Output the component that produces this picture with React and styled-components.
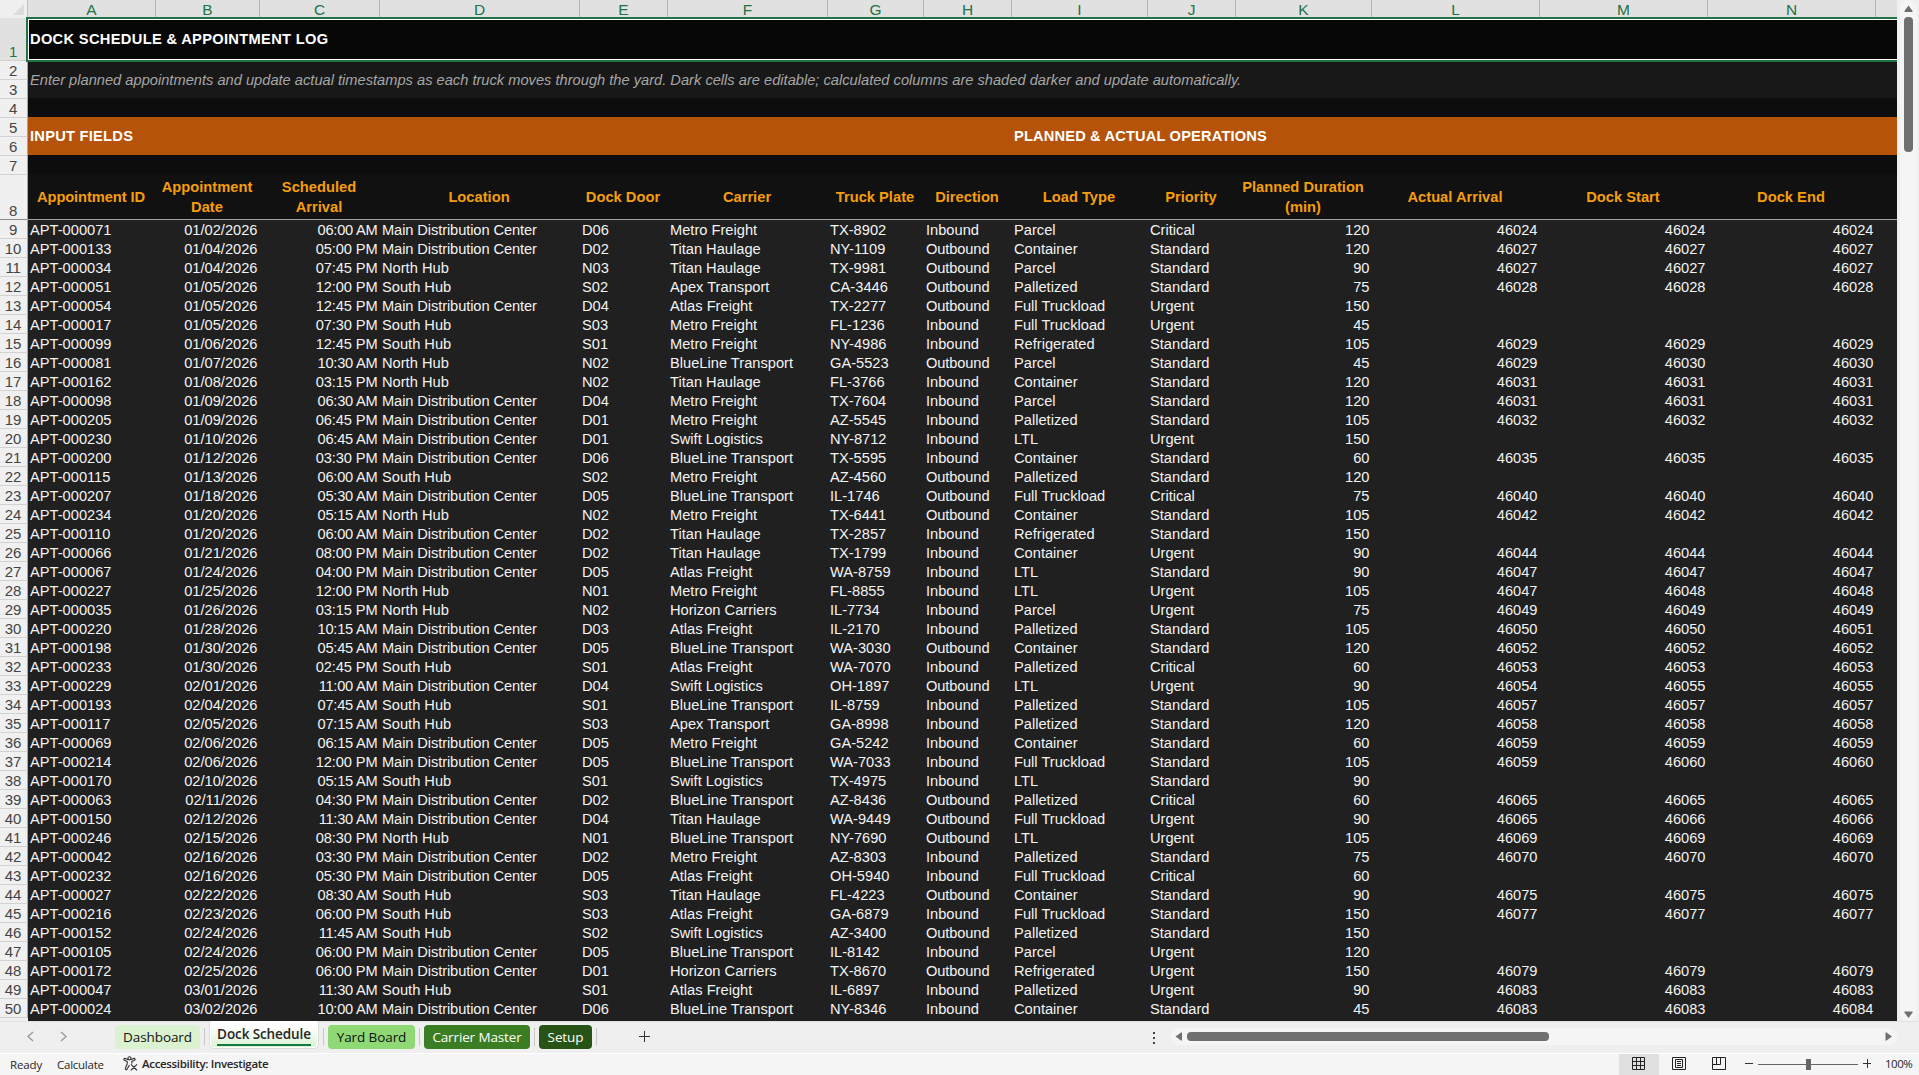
import React from "react";
import styled, { createGlobalStyle } from "styled-components";

const Global = createGlobalStyle`
  * { box-sizing: border-box; }
  html, body { margin: 0; padding: 0; overflow: hidden; background: #efefef; }
`;

const SANS = '"Liberation Sans", Arial, sans-serif';
const UI = '"Open Sans", "Noto Sans", sans-serif';

const COLUMNS = [
  { id: "A", width: 128, title: ["Appointment ID"], titleTrack: -0.08 },
  { id: "B", width: 104, title: ["Appointment", "Date"], align: "right" },
  { id: "C", width: 120, title: ["Scheduled", "Arrival"], align: "right" },
  { id: "D", width: 200, title: ["Location"] },
  { id: "E", width: 88, title: ["Dock Door"] },
  { id: "F", width: 160, title: ["Carrier"] },
  { id: "G", width: 96, title: ["Truck Plate"] },
  { id: "H", width: 88, title: ["Direction"] },
  { id: "I", width: 136, title: ["Load Type"] },
  { id: "J", width: 88, title: ["Priority"] },
  { id: "K", width: 136, title: ["Planned Duration", "(min)"], align: "right" },
  { id: "L", width: 168, title: ["Actual Arrival"], align: "right" },
  { id: "M", width: 168, title: ["Dock Start"], align: "right" },
  { id: "N", width: 168, title: ["Dock End"], align: "right" },
];
const TEMPLATE = COLUMNS.map((c) => `${c.width}px`).join(" ") + " 1fr";

const LOCATIONS = { M: "Main Distribution Center", N: "North Hub", S: "South Hub" };
const CARRIERS = {
  M: "Metro Freight", T: "Titan Haulage", X: "Apex Transport", A: "Atlas Freight",
  B: "BlueLine Transport", S: "Swift Logistics", H: "Horizon Carriers",
};
const LOADS = {
  P: "Parcel", C: "Container", Z: "Palletized", F: "Full Truckload", R: "Refrigerated", L: "LTL",
};
const PRIORITIES = { C: "Critical", S: "Standard", U: "Urgent" };

/* id | date | time | dock (prefix N/S = hub, D = main) | carrier | plate | direction | load | priority | minutes | arrival | start | end */
const LOG = `
071|01/02|06:00 AM|D06|M|TX-8902|I|P|C|120|46024|46024|46024
133|01/04|05:00 PM|D02|T|NY-1109|O|C|S|120|46027|46027|46027
034|01/04|07:45 PM|N03|T|TX-9981|O|P|S|90|46027|46027|46027
051|01/05|12:00 PM|S02|X|CA-3446|O|Z|S|75|46028|46028|46028
054|01/05|12:45 PM|D04|A|TX-2277|O|F|U|150
017|01/05|07:30 PM|S03|M|FL-1236|I|F|U|45
099|01/06|12:45 PM|S01|M|NY-4986|I|R|S|105|46029|46029|46029
081|01/07|10:30 AM|N02|B|GA-5523|O|P|S|45|46029|46030|46030
162|01/08|03:15 PM|N02|T|FL-3766|I|C|S|120|46031|46031|46031
098|01/09|06:30 AM|D04|M|TX-7604|I|P|S|120|46031|46031|46031
205|01/09|06:45 PM|D01|M|AZ-5545|I|Z|S|105|46032|46032|46032
230|01/10|06:45 AM|D01|S|NY-8712|I|L|U|150
200|01/12|03:30 PM|D06|B|TX-5595|I|C|S|60|46035|46035|46035
115|01/13|06:00 AM|S02|M|AZ-4560|O|Z|S|120
207|01/18|05:30 AM|D05|B|IL-1746|O|F|C|75|46040|46040|46040
234|01/20|05:15 AM|N02|M|TX-6441|O|C|S|105|46042|46042|46042
110|01/20|06:00 AM|D02|T|TX-2857|I|R|S|150
066|01/21|08:00 PM|D02|T|TX-1799|I|C|U|90|46044|46044|46044
067|01/24|04:00 PM|D05|A|WA-8759|I|L|S|90|46047|46047|46047
227|01/25|12:00 PM|N01|M|FL-8855|I|L|U|105|46047|46048|46048
035|01/26|03:15 PM|N02|H|IL-7734|I|P|U|75|46049|46049|46049
220|01/28|10:15 AM|D03|A|IL-2170|I|Z|S|105|46050|46050|46051
198|01/30|05:45 AM|D05|B|WA-3030|O|C|S|120|46052|46052|46052
233|01/30|02:45 PM|S01|A|WA-7070|I|Z|C|60|46053|46053|46053
229|02/01|11:00 AM|D04|S|OH-1897|O|L|U|90|46054|46055|46055
193|02/04|07:45 AM|S01|B|IL-8759|I|Z|S|105|46057|46057|46057
117|02/05|07:15 AM|S03|X|GA-8998|I|Z|S|120|46058|46058|46058
069|02/06|06:15 AM|D05|M|GA-5242|I|C|S|60|46059|46059|46059
214|02/06|12:00 PM|D05|B|WA-7033|I|F|S|105|46059|46060|46060
170|02/10|05:15 AM|S01|S|TX-4975|I|L|S|90
063|02/11|04:30 PM|D02|B|AZ-8436|O|Z|C|60|46065|46065|46065
150|02/12|11:30 AM|D04|T|WA-9449|O|F|U|90|46065|46066|46066
246|02/15|08:30 PM|N01|B|NY-7690|O|L|U|105|46069|46069|46069
042|02/16|03:30 PM|D02|M|AZ-8303|I|Z|S|75|46070|46070|46070
232|02/16|05:30 PM|D05|A|OH-5940|I|F|C|60
027|02/22|08:30 AM|S03|T|FL-4223|O|C|S|90|46075|46075|46075
216|02/23|06:00 PM|S03|A|GA-6879|I|F|S|150|46077|46077|46077
152|02/24|11:45 AM|S02|S|AZ-3400|O|Z|S|150
105|02/24|06:00 PM|D05|B|IL-8142|I|P|U|120
172|02/25|06:00 PM|D01|H|TX-8670|O|R|U|150|46079|46079|46079
047|03/01|11:30 AM|S01|A|IL-6897|I|Z|U|90|46083|46083|46083
024|03/02|10:00 AM|D06|B|NY-8346|I|C|S|45|46083|46083|46084
`
  .trim()
  .split("\n")
  .map((line) => {
    const [id, date, time, dock, carrier, plate, dir, load, pri, min, a = "", s = "", e = ""] =
      line.split("|");
    return [
      `APT-000${id}`,
      `${date}/2026`,
      time,
      LOCATIONS[dock[0] === "D" ? "M" : dock[0]],
      dock,
      CARRIERS[carrier],
      plate,
      dir === "I" ? "Inbound" : "Outbound",
      LOADS[load],
      PRIORITIES[pri],
      min, a, s, e,
    ];
  });

const trackOf = (value) => {
  if (value.endsWith(" AM")) return -0.25;
  if (value.endsWith(" PM")) return -0.12;
  if (value === LOCATIONS.M) return -0.1;
  if (value === "Outbound") return -0.12;
  return 0;
};

const ROW_HEADS = [
  { n: 1, h: 43, active: true },
  { n: 2, h: 19 }, { n: 3, h: 19 }, { n: 4, h: 19 }, { n: 5, h: 19 },
  { n: 6, h: 19 }, { n: 7, h: 19 }, { n: 8, h: 45 },
  ...LOG.map((_, i) => ({ n: i + 9, h: 19 })),
];

const Window = styled.div`
  width: 1919px;
  height: 1075px;
  display: flex;
  flex-direction: column;
  background: #efefef;
  font-family: ${SANS};
  overflow: hidden;
`;

const Workspace = styled.div`
  display: grid;
  grid-template-columns: 28px 1869px 22px;
  height: 1021px;
  overflow: hidden;
`;

const RowHeads = styled.div`
  display: flex;
  flex-direction: column;
  background: #f0f0f0;
  overflow: hidden;
`;

const Corner = styled.div`
  height: 18px;
  flex: none;
  background: #efefef;
  border-right: 1px solid #bdbdbd;
  display: flex;
  align-items: flex-end;
  justify-content: flex-end;
  padding: 0 3px 3px 0;
`;

const RowHead = styled.div`
  flex: none;
  position: relative;
  height: ${(p) => p.$h}px;
  display: flex;
  align-items: flex-end;
  justify-content: center;
  padding-right: 1px;
  font-size: 15px;
  line-height: 17px;
  letter-spacing: -0.2px;
  color: ${(p) => (p.$active ? "#217346" : "#444")};
  background: ${(p) => (p.$active ? "#e1e1e1" : "#f0f0f0")};
  border-bottom: 1px solid ${(p) => (p.$freeze ? "#8c8c8c" : "#d2d2d2")};
  border-right: 1px solid #a6a6a6;

  &::after {
    content: "";
    display: ${(p) => (p.$active ? "block" : "none")};
    position: absolute;
    top: -1px;
    right: -1px;
    bottom: -2px;
    width: 2px;
    z-index: 1;
    background: #217346;
  }
`;

const Sheet = styled.div`
  display: flex;
  flex-direction: column;
  background: #202020;
  overflow: hidden;
`;

const ColumnHeads = styled.div`
  flex: none;
  height: 17px;
  display: grid;
  grid-template-columns: ${TEMPLATE};
  background: #e1e1e1;
`;

const ColumnHead = styled.div`
  border-right: 1px solid #b4b4b4;
  text-align: center;
  font-size: 15.5px;
  line-height: 19px;
  color: #217346;
`;

const TitleRow = styled.div`
  flex: none;
  height: 45px;
  background: #070707;
  border: 2px solid #217346;
  border-right: 0;
  border-left: 0;
  box-shadow: inset 0 1px #fff, inset 0 -1px #fff, inset 1px 0 #fff;
  display: flex;
  align-items: center;
  padding: 0 0 2px 2px;
  color: #fff;
  font-size: 14.67px;
  font-weight: bold;
  letter-spacing: 0.32px;
`;

const NoteRow = styled.div`
  flex: none;
  height: 36px;
  background: #181818;
  color: #a6a6a6;
  font-size: 14.67px;
  font-style: italic;
  line-height: 36px;
  padding-left: 2px;
`;

const Spacer = styled.div`
  flex: none;
  height: 19px;
  background: #0d0d0d;
`;

const BandRow = styled.div`
  flex: none;
  height: 38px;
  background: #b45309;
  display: grid;
  grid-template-columns: 984px 1fr;
  color: #fff;
  font-size: 14.67px;
  font-weight: bold;
  line-height: 38px;
`;

const Band = styled.div`
  padding-left: 2px;
  letter-spacing: ${(p) => p.$track || 0}px;
`;

const TitlesRow = styled.div`
  flex: none;
  height: 46px;
  display: grid;
  grid-template-columns: ${TEMPLATE};
  background: #111;
  border-bottom: 1px solid #a0a0a0;
`;

const ColumnTitle = styled.div`
  display: flex;
  flex-direction: column;
  justify-content: center;
  align-items: center;
  padding-right: 2px;
  white-space: nowrap;
  color: #f59e0b;
  font-size: 14.67px;
  font-weight: bold;
  line-height: 20px;
  letter-spacing: ${(p) => p.$track || 0.02}px;
`;

const DataRow = styled.div`
  flex: none;
  height: 19px;
  display: grid;
  grid-template-columns: ${TEMPLATE};
  color: #f3f3f3;
  font-size: 14.67px;
  line-height: 21px;
`;

const Cell = styled.div`
  height: 19px;
  padding: 0 ${(p) => (p.$align ? 2.5 : 0)}px 0 2px;
  white-space: nowrap;
  text-align: ${(p) => p.$align || "left"};
  letter-spacing: ${(p) => p.$track}px;
`;

const VScroll = styled.div`
  display: flex;
  justify-content: center;
  padding-left: 1px;
  background: #efefef;
`;

const VTrack = styled.div`
  width: 17px;
  background: #f5f5f5;
  border-radius: 8px;
  display: flex;
  flex-direction: column;
  align-items: center;
  padding: 5px 0 3px;
`;

const VThumb = styled.div`
  width: 9px;
  height: 135px;
  margin: 5px 0 auto;
  border-radius: 4px;
  background: #707070;
`;

const TabBar = styled.div`
  flex: none;
  height: 33px;
  display: flex;
  background: #efefef;
  border-top: 1px solid #e2e2e2;
  border-bottom: 1px solid #fff;
  font-family: ${UI};
`;

const Arrows = styled.div`
  width: 115px;
  display: flex;
  gap: 26px;
  padding: 9px 0 0 27px;
`;

const Tab = styled.div`
  width: ${(p) => p.$w}px;
  height: 24px;
  margin-top: 3px;
  border-radius: 4px;
  background: ${(p) => p.$bg};
  color: ${(p) => p.$fg || "#111"};
  font-size: 13.5px;
  line-height: 24px;
  text-align: center;
  white-space: nowrap;
  letter-spacing: ${(p) => p.$track || 0}px;
`;

const ActiveTab = styled.div`
  width: 110px;
  height: 28px;
  margin-top: -1px;
  border-radius: 0 0 5px 5px;
  background: linear-gradient(#fff 20%, #daf2d0);
  border: 1px solid #dcdcdc;
  border-top: 0;
  box-shadow: inset 1px 0 #fff, inset -1px -1px #fff;
  display: flex;
  flex-direction: column;
  align-items: center;
`;

const ActiveLabel = styled.div`
  width: 94px;
  height: 25px;
  border-bottom: 2px solid #107c41;
  color: #262626;
  font-size: 13.5px;
  font-weight: 600;
  line-height: 27px;
  text-align: center;
  white-space: nowrap;
  letter-spacing: -0.1px;
`;

const Divider = styled.div`
  width: 1px;
  height: 18px;
  margin: 6px 4px 0;
  background: #c8c8c8;
`;

const AddSlot = styled.div`
  padding: 9px 0 0 38px;
  flex: 1;
`;

const Dots = styled.div`
  display: flex;
  flex-direction: column;
  gap: 3px;
  width: 2px;
  margin: 10px 16px 0 0;
`;

const Dot = styled.i`
  width: 2px;
  height: 2px;
  background: #444;
`;

const HTrack = styled.div`
  width: 726px;
  height: 17px;
  margin: 6px 22px 0 0;
  border-radius: 8px;
  background: #f5f5f5;
  display: flex;
  align-items: center;
  padding: 0 5px 0 4px;
`;

const HThumb = styled.div`
  width: 362px;
  height: 9px;
  margin: 0 auto 0 5px;
  border-radius: 4px;
  background: #707070;
`;

const StatusBar = styled.div`
  flex: none;
  height: 21px;
  display: flex;
  align-items: center;
  background: #f5f5f5;
  color: #262626;
  font-family: ${UI};
  font-size: 11.5px;
  white-space: nowrap;
`;

const StatusText = styled.div`
  width: ${(p) => p.$w}px;
  height: 21px;
  line-height: ${(p) => p.$line || 21}px;
  margin-left: ${(p) => p.$gap || 0}px;
  font-weight: ${(p) => (p.$bold ? 600 : 400)};
  letter-spacing: ${(p) => p.$track || 0}px;
`;

const Grow = styled.div`
  flex: 1;
`;

const ViewButton = styled.div`
  width: 40px;
  height: 21px;
  display: flex;
  align-items: center;
  justify-content: center;
  padding-bottom: 2px;
  background: ${(p) => (p.$on ? "#e0e0e0" : "transparent")};
`;

const Zoom = styled.div`
  display: flex;
  align-items: center;
  padding: 0 0 2px 6px;
`;

const Svg = styled.svg`
  display: block;
  flex: none;
`;

function Icon({ w, h, children, fill = "none" }) {
  return (
    <Svg width={w} height={h} viewBox={`0 0 ${w} ${h}`} fill={fill}>
      {children}
    </Svg>
  );
}

function Triangle({ dir }) {
  const vertical = dir === "up" || dir === "down";
  const paths = {
    up: "M4.5 .5L8.6 6Q8.8 7 8 7H1Q.2 7 .4 6Z",
    down: "M4.5 7L.4 1.5Q.2 .5 1 .5H8Q8.8 .5 8.6 1.5Z",
    left: "M.5 4.5L6 .4Q7 .2 7 1V8Q7 8.8 6 8.6Z",
    right: "M7 4.5L1.5 .4Q.5 .2 .5 1V8Q.5 8.8 1.5 8.6Z",
  };
  return (
    <Icon w={vertical ? 9 : 7} h={vertical ? 7 : 9} fill="#707070">
      <path d={paths[dir]} />
    </Icon>
  );
}

function AccessibilityIcon() {
  return (
    <Icon w={15} h={17}>
      <g stroke="#333" strokeWidth="1.1" fill="none" strokeLinecap="round" strokeLinejoin="round">
        <circle cx="6.5" cy="2.3" r="1.6" />
        <path d="M4.7 3.6L2.3 2.5C1 2 .3 3.7 1.5 4.3L4.2 5.6V8L2.4 12.3C2 13.7 3.6 14.3 4.2 13L6.2 9.4" />
        <path d="M8.3 3.6L10.7 2.5C12 2 12.7 3.7 11.5 4.3L8.8 5.6V7.3" />
        <path d="M8.2 8.6L13.7 14M13.7 8.6L8.2 14" />
      </g>
    </Icon>
  );
}

export default function App() {
  return (
    <>
      <Global />
      <Window>
        <Workspace>
          <RowHeads>
            <Corner>
              <Icon w={11} h={11}><path d="M11 0V11H0Z" fill="#dcdcdc" /></Icon>
            </Corner>
            {ROW_HEADS.map((r) => (
              <RowHead key={r.n} $h={r.h} $active={r.active} $freeze={r.n === 8}>{r.n}</RowHead>
            ))}
          </RowHeads>

          <Sheet>
            <ColumnHeads>
              {COLUMNS.map((c) => <ColumnHead key={c.id}>{c.id}</ColumnHead>)}
            </ColumnHeads>
            <TitleRow>DOCK SCHEDULE &amp; APPOINTMENT LOG</TitleRow>
            <NoteRow>
              Enter planned appointments and update actual timestamps as each truck moves through the
              yard. Dark cells are editable; calculated columns are shaded darker and update automatically.
            </NoteRow>
            <Spacer />
            <BandRow>
              <Band $track={0.25}>INPUT FIELDS</Band>
              <Band $track={0.15}>PLANNED &amp; ACTUAL OPERATIONS</Band>
            </BandRow>
            <Spacer />
            <TitlesRow>
              {COLUMNS.map((c) => (
                <ColumnTitle key={c.id} $track={c.titleTrack}>
                  {c.title.map((t) => <span key={t}>{t}</span>)}
                </ColumnTitle>
              ))}
            </TitlesRow>
            {LOG.map((row) => (
              <DataRow key={row[0]}>
                {row.map((value, i) => (
                  <Cell key={COLUMNS[i].id} $align={COLUMNS[i].align} $track={trackOf(value)}>
                    {value}
                  </Cell>
                ))}
              </DataRow>
            ))}
          </Sheet>

          <VScroll>
            <VTrack>
              <Triangle dir="up" />
              <VThumb />
              <Triangle dir="down" />
            </VTrack>
          </VScroll>
        </Workspace>

        <TabBar>
          <Arrows>
            <Icon w={7} h={11}><path d="M6 1L1 5.5L6 10" stroke="#999" strokeWidth="1.3" /></Icon>
            <Icon w={7} h={11}><path d="M1 1L6 5.5L1 10" stroke="#999" strokeWidth="1.3" /></Icon>
          </Arrows>
          <Tab $w={85} $bg="#daf2d0" $track={-0.08}>Dashboard</Tab>
          <Divider />
          <ActiveTab><ActiveLabel>Dock Schedule</ActiveLabel></ActiveTab>
          <Divider />
          <Tab $w={87} $bg="#8ed973" $track={-0.1}>Yard Board</Tab>
          <Divider />
          <Tab $w={106} $bg="#3b7d23" $fg="#fff" $track={-0.13}>Carrier Master</Tab>
          <Divider />
          <Tab $w={53} $bg="#275317" $fg="#fff" $track={-0.1}>Setup</Tab>
          <Divider />
          <AddSlot>
            <Icon w={11} h={11}><path d="M5.5 0V11M0 5.5H11" stroke="#333" /></Icon>
          </AddSlot>
          <Dots><Dot /><Dot /><Dot /></Dots>
          <HTrack>
            <Triangle dir="left" />
            <HThumb />
            <Triangle dir="right" />
          </HTrack>
        </TabBar>

        <StatusBar>
          <StatusText $w={47} $gap={10} $track={-0.15}>Ready</StatusText>
          <StatusText $w={66} $track={-0.25}>Calculate</StatusText>
          <AccessibilityIcon />
          <StatusText $w={140} $gap={4} $bold $line={19} $track={-0.33}>Accessibility: Investigate</StatusText>
          <Grow />
          <ViewButton $on>
            <Icon w={14} h={14}>
              <path d="M.5 .5H12.5V12.5H.5ZM4.5 .5V12.5M8.5 .5V12.5M.5 4.5H12.5M.5 8.5H12.5" stroke="#222" />
            </Icon>
          </ViewButton>
          <ViewButton>
            <Icon w={14} h={14}>
              <path d="M.5 .5H13.5V12.5H.5ZM3.5 2.5H10.5V10.5H3.5ZM5 4.5H9M5 6.5H9M5 8.5H9" stroke="#222" />
            </Icon>
          </ViewButton>
          <ViewButton>
            <Icon w={14} h={14}>
              <path d="M.5 .5H13.5V12.5H.5ZM.5 7.5H8.5V.5M4.5 .5V7.5" stroke="#222" />
            </Icon>
          </ViewButton>
          <Zoom>
            <Icon w={127} h={13}>
              <path d="M0 6.5H8M118 6.5H126M122.5 2V11" stroke="#333" />
              <path d="M13 7.5H113" stroke="#666" />
              <path d="M61 2H66V13H61Z" fill="#666" />
            </Icon>
          </Zoom>
          <StatusText $w={34} $gap={13} $line={19} $track={-0.5}>100%</StatusText>
        </StatusBar>
      </Window>
    </>
  );
}
